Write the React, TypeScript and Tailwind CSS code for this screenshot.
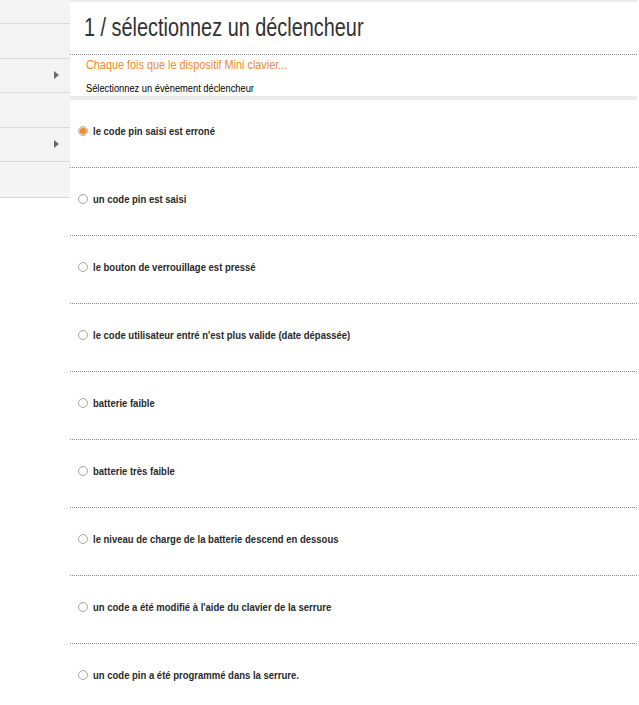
const triggers = [
  "le code pin saisi est erroné",
  "un code pin est saisi",
  "le bouton de verrouillage est pressé",
  "le code utilisateur entré n'est plus valide (date dépassée)",
  "batterie faible",
  "batterie très faible",
  "le niveau de charge de la batterie descend en dessous",
  "un code a été modifié à l'aide du clavier de la serrure",
  "un code pin a été programmé dans la serrure.",
];

const sideRows = [false, true, false, true, false];

const Radio = (props: { checked: boolean }) => {
  const { checked } = props;
  return (
    <span className="flex h-[10px] w-[10px] shrink-0 items-center justify-center rounded-full border border-[#a8a8a8] bg-white">
      {checked && <span className="h-[6px] w-[6px] rounded-full bg-[#f08a2c] shadow-[0_0_0_1px_#f7c79a]" />}
    </span>
  );
};

export default function App() {
  return (
    <div className="flex min-h-[705px] w-[639px] bg-white font-['Liberation_Sans',Arial,sans-serif]">
      <aside className="w-[70px] shrink-0 self-start border-b border-[#d8d8d8] bg-[#f4f4f4]">
        <div className="h-[24px] border-b border-[#dcdcdc]" />
        {sideRows.map((arrow, i) => (
          <div key={i} className={`flex h-[34.5px] items-center justify-end pr-[11px] ${i < sideRows.length - 1 ? "border-b border-[#dcdcdc]" : ""}`}>
            {arrow && <span className="h-0 w-0 border-y-[4px] border-l-[5px] border-y-transparent border-l-[#6b6b6b]" />}
          </div>
        ))}
      </aside>

      <main className="w-[567px] border-t-2 border-[#ececec]">
        <div className="border-b border-dotted border-[#8a8a8a]">
          <h1 className="h-[52px] pl-[14px] pt-[11px] text-[25px] leading-[28px] text-[#333]">
            <span className="inline-block origin-left scale-x-[0.795] whitespace-nowrap">1 / sélectionnez un déclencheur</span>
          </h1>
        </div>
        <p className="pl-[16px] pt-[1px] text-[13px] leading-[17px] text-[#f08a2c]">
          <span className="inline-block origin-left scale-x-[0.834] whitespace-nowrap">Chaque fois que le dispositif Mini clavier...</span>
        </p>
        <p className="pl-[16px] pt-[9px] text-[11px] leading-[13px] text-black">
          <span className="inline-block origin-left scale-x-[0.845] whitespace-nowrap">Sélectionnez un évènement déclencheur</span>
        </p>
        <div className="mt-[1px] h-[4px] bg-[#ececec]" />

        <ul>
          {triggers.map((label, i) => (
            <li key={label} className="h-[68px] border-b border-dotted border-[#8a8a8a] pt-[24px] pl-[8px] last:border-b-0">
              <label className="flex items-center gap-[5px]">
                <Radio checked={i === 0} />
                <span className="inline-block origin-left scale-x-[0.826] whitespace-nowrap text-[11.5px] font-bold leading-[14px] text-[#2a2a2a]">{label}</span>
              </label>
            </li>
          ))}
        </ul>
      </main>
    </div>
  );
}
